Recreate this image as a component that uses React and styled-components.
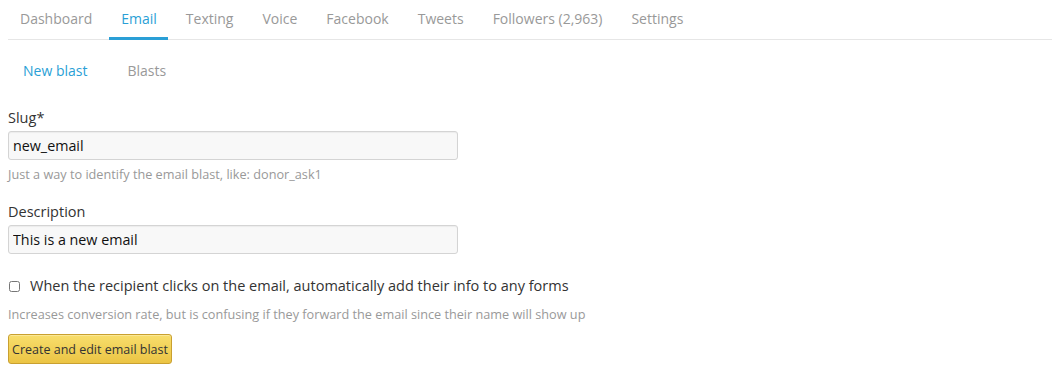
import styled, { createGlobalStyle } from 'styled-components';

//Email blast creation page: top tabs, sub tabs, and the form.

const tabs = ['Dashboard', 'Email', 'Texting', 'Voice', 'Facebook', 'Tweets', 'Followers (2,963)', 'Settings'];

const App = () => {
  return (
    <Page>
      <GlobalStyle />
      <TabBar>
        {tabs.map((t) => (
          <Tab key={t} $active={t === 'Email'}>
            {t}
          </Tab>
        ))}
      </TabBar>
      <SubNav>
        <SubTab $active>New blast</SubTab>
        <SubTab>Blasts</SubTab>
      </SubNav>
      <Form>
        <Field>
          <Label>Slug*</Label>
          <Input defaultValue="new_email" />
          <Help>Just a way to identify the email blast, like: donor_ask1</Help>
        </Field>
        <Field>
          <Label>Description</Label>
          <Input defaultValue="This is a new email" />
        </Field>
        <CheckRow>
          <Check type="checkbox" />
          <span>When the recipient clicks on the email, automatically add their info to any forms</span>
        </CheckRow>
        <Help $gap={10}>Increases conversion rate, but is confusing if they forward the email since their name will show up</Help>
        <Button>Create and edit email blast</Button>
      </Form>
    </Page>
  );
};

//STYLING
const GlobalStyle = createGlobalStyle`
  body {
    margin: 0;
    background: #fff;
    font-family: 'Open Sans', 'Noto Sans', sans-serif;
    color: #333;
  }
`;

const Page = styled.div`
  padding: 0 8px;
`;

const TabBar = styled.div`
  display: flex;
  gap: 6px;
  height: 39px;
  border-bottom: 1px solid #e6e6e6;
`;

const Tab = styled.div`
  padding: 0 11px 0 12px;
  font-size: 14px;
  line-height: 37px;
  color: ${(p) => (p.$active ? '#2a9fd6' : '#999')};
  border-bottom: 3px solid ${(p) => (p.$active ? '#2a9fd6' : 'transparent')};
  height: 37px;
`;

const SubNav = styled.div`
  display: flex;
  gap: 10px;
  padding-top: 19px;
  height: 42px;
`;

const SubTab = styled.div`
  padding: 0 15px;
  font-size: 14px;
  line-height: 24px;
  color: ${(p) => (p.$active ? '#2a9fd6' : '#999')};
`;

const Form = styled.div`
  display: flex;
  flex-direction: column;
  align-items: flex-start;
  padding-top: 7px;
`;

const Field = styled.div`
  display: flex;
  flex-direction: column;
  margin-bottom: 19px;
`;

const Label = styled.label`
  font-size: 14.5px;
  line-height: 20px;
  margin-bottom: 3px;
`;

const Input = styled.input`
  box-sizing: border-box;
  width: 450px;
  height: 29px;
  padding: 4px 4px;
  font-family: 'Open Sans', sans-serif;
  font-size: 14.3px;
  color: #111;
  background: #f8f8f8;
  border: 1px solid #d4d4d4;
  border-radius: 3px;
  box-shadow: inset 0 1px 1px rgba(0, 0, 0, 0.05);
  outline: none;
`;

const Help = styled.div`
  font-size: 12.7px;
  line-height: 17px;
  color: #999;
  margin-top: ${(p) => p.$gap || 6}px;
`;

const CheckRow = styled.label`
  display: flex;
  align-items: center;
  gap: 10px;
  font-size: 14.5px;
  line-height: 20px;
  margin-top: 3px;
`;

const Check = styled.input`
  margin: 0 0 0 1px;
  width: 11px;
  height: 11px;
`;

const Button = styled.button`
  margin-top: 11px;
  height: 30px;
  width: 164px;
  padding: 0;
  font-family: 'Open Sans', sans-serif;
  font-size: 12.5px;
  color: #333;
  background: linear-gradient(#f8de6c, #ebc444);
  border: 1px solid #c9a030;
  border-radius: 3px;
  box-shadow: inset 0 1px 0 rgba(255, 255, 255, 0.3);
`;

export default App;
